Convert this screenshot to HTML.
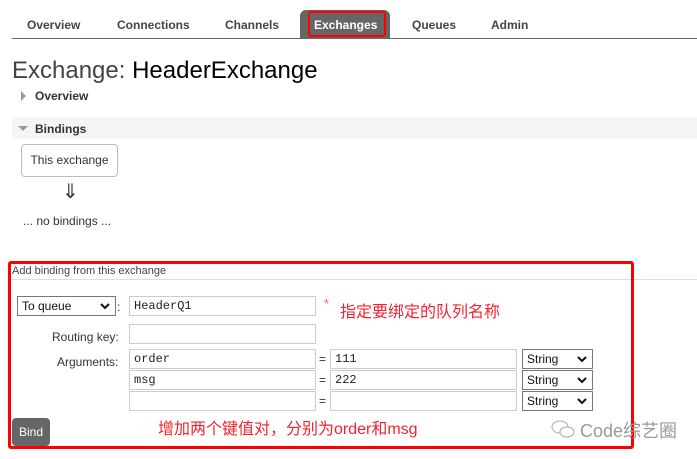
<!DOCTYPE html>
<html><head><meta charset="utf-8"><style>
body{margin:0;width:697px;height:459px;background:#fff;font-family:"Liberation Sans","Noto Sans CJK SC",sans-serif;color:#333;position:relative;overflow:hidden}
.a{position:absolute}
.tab{position:absolute;top:18px;font-size:12px;font-weight:bold;color:#444}
.inp{position:absolute;border:1px solid #ccc;height:20px;box-sizing:border-box;font-family:"Liberation Mono",monospace;font-size:12px;padding:2px 4px;color:#222;background:#fff}
.sel{position:absolute;border:1px solid #777;height:20px;box-sizing:border-box;font-size:12px;padding:2px 4px;color:#111;background:#fff}
.sel svg{position:absolute;right:5px;top:6px}
.red{color:#f5222d;font-size:16px}
</style></head><body>
<div class="tab" style="left:27px">Overview</div>
<div class="tab" style="left:117px">Connections</div>
<div class="tab" style="left:225px">Channels</div>
<div class="a" style="left:300px;top:10px;width:90px;height:28px;background:#666;border-radius:6px 6px 0 0"></div>
<div class="a" style="left:308px;top:11px;width:78px;height:26px;border:2px solid #f00;box-sizing:border-box;border-radius:3px"></div>
<div class="tab" style="left:314px;color:#fff">Exchanges</div>
<div class="tab" style="left:412px">Queues</div>
<div class="tab" style="left:491px">Admin</div>
<div class="a" style="left:12px;top:38px;width:685px;height:1px;background:#666"></div>
<div class="a" style="left:12px;top:57px;font-size:24px;color:#444">Exchange: <span style="color:#000">HeaderExchange</span></div>
<div class="a" style="left:21px;top:91px;width:0;height:0;border-left:5px solid #999;border-top:5px solid transparent;border-bottom:5px solid transparent"></div>
<div class="a" style="left:35px;top:89px;font-size:12px;font-weight:bold">Overview</div>
<div class="a" style="left:12px;top:117px;width:685px;height:22px;background:#f5f5f5"></div>
<div class="a" style="left:18px;top:126px;width:0;height:0;border-top:5px solid #999;border-left:5px solid transparent;border-right:5px solid transparent"></div>
<div class="a" style="left:35px;top:122px;font-size:12px;font-weight:bold">Bindings</div>
<div class="a" style="left:21px;top:144px;width:97px;height:33px;border:1px solid #bbb;border-radius:4px;box-sizing:border-box;font-size:12px;text-align:center;line-height:31px">This exchange</div>
<div class="a" style="left:62px;top:179px;font-size:20px">⇓</div>
<div class="a" style="left:23px;top:214px;font-size:12px">... no bindings ...</div>
<div class="a" style="left:12px;top:279px;width:685px;height:1px;background:#ddd"></div>
<div class="a" style="left:8px;top:261px;width:626px;height:188px;border:3px solid #f00;box-sizing:border-box;border-radius:3px"></div>
<div class="a" style="left:12px;top:265px;font-size:11px;color:#444">Add binding from this exchange</div>
<div class="sel" style="left:17px;top:296px;width:99px">To queue<svg width="10" height="7"><path d="M1 1L5 5L9 1" stroke="#111" stroke-width="2" fill="none"/></svg></div>
<div class="a" style="left:117px;top:300px;font-size:12px">:</div>
<div class="inp" style="left:129px;top:296px;width:187px">HeaderQ1</div>
<div class="a red" style="left:324px;top:296px;font-size:13px;color:#f66">*</div>
<div class="a red" style="left:340px;top:298px">指定要绑定的队列名称</div>
<div class="a" style="left:52px;top:330px;font-size:12px">Routing key:</div>
<div class="inp" style="left:129px;top:324px;width:187px"></div>
<div class="a" style="left:57px;top:355px;font-size:12px">Arguments:</div>
<div class="inp" style="left:129px;top:349px;width:187px">order</div>
<div class="inp" style="left:129px;top:370px;width:187px">msg</div>
<div class="inp" style="left:129px;top:391px;width:187px"></div>
<div class="a" style="left:319px;top:352px;font-size:12px">=</div>
<div class="a" style="left:319px;top:373px;font-size:12px">=</div>
<div class="a" style="left:319px;top:394px;font-size:12px">=</div>
<div class="inp" style="left:330px;top:349px;width:187px">111</div>
<div class="inp" style="left:330px;top:370px;width:187px">222</div>
<div class="inp" style="left:330px;top:391px;width:187px"></div>
<div class="sel" style="left:522px;top:349px;width:71px">String<svg width="10" height="7"><path d="M1 1L5 5L9 1" stroke="#111" stroke-width="2" fill="none"/></svg></div>
<div class="sel" style="left:522px;top:370px;width:71px">String<svg width="10" height="7"><path d="M1 1L5 5L9 1" stroke="#111" stroke-width="2" fill="none"/></svg></div>
<div class="sel" style="left:522px;top:391px;width:71px">String<svg width="10" height="7"><path d="M1 1L5 5L9 1" stroke="#111" stroke-width="2" fill="none"/></svg></div>
<div class="a red" style="left:158px;top:415px">增加两个键值对，分别为order和msg</div>
<div class="a" style="left:12px;top:418px;width:38px;height:28px;background:#666;border-radius:4px;color:#fff;font-size:12px;text-align:center;line-height:28px">Bind</div>
<svg class="a" style="left:550px;top:418px" width="26" height="22"><ellipse cx="10" cy="9" rx="8" ry="6" fill="none" stroke="#aaa"/><ellipse cx="17" cy="14" rx="7" ry="5" fill="#fff" stroke="#aaa"/></svg>
<div class="a" style="left:580px;top:417px;font-size:18px;color:#999">Code综艺圈</div>
</body></html>
